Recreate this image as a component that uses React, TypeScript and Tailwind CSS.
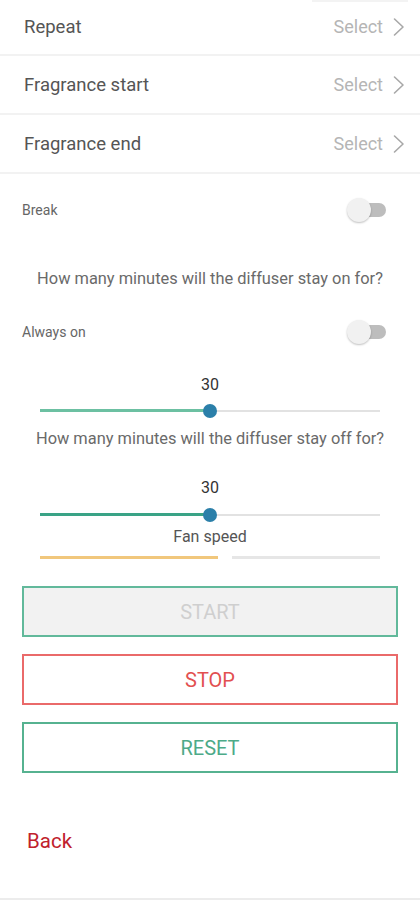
import React, { useState } from "react";

const font = { fontFamily: "Roboto, 'Liberation Sans', sans-serif" };

const SelectRow = ({ label, className = "" }: { label: string; className?: string }) => (
  <div className={`flex items-center justify-between pl-6 pr-[15px] border-b-2 border-[#f2f2f2] ${className}`}>
    <span className="text-[18.5px] leading-[24px] text-[#555]">{label}</span>
    <span className="flex items-center gap-[9px] text-[18px] leading-[24px] text-[#b5b5b5]">
      Select
      <svg width="13" height="20" viewBox="0 0 13 20" fill="none">
        <path d="M2.5 2 L11 10 L2.5 18" stroke="#a8a8a8" strokeWidth="1.6" strokeLinecap="round" strokeLinejoin="round" />
      </svg>
    </span>
  </div>
);

const Toggle = () => (
  <div className="relative w-[40px] h-[24px] mr-[33px]">
    <div className="absolute left-[10px] right-[1px] top-[5px] h-[14px] rounded-full bg-[#bdbdbd]" />
    <div className="absolute left-0 top-0 w-[24px] h-[24px] rounded-full bg-[#f1f1f1] shadow-[0_1px_2px_rgba(0,0,0,0.25)]" />
  </div>
);

const Slider = ({ value, fill, gap }: { value: number; fill: string; gap: string }) => (
  <div className="flex flex-col items-center">
    <span className="text-[16px] text-[#333] leading-[16px]">{value}</span>
    <div className={`relative w-[340px] h-[14px] ${gap}`}>
      <div className="absolute left-0 right-0 top-[6px] h-[2px] bg-[#e2e2e2]" />
      <div className={`absolute left-0 top-[5px] h-[3px] w-[170px] ${fill}`} />
      <div className="absolute left-[163px] top-0 w-[14px] h-[14px] rounded-full bg-[#2b7fa9]" />
    </div>
  </div>
);

export default function App() {
  const [status] = useState("idle");

  return (
    <div className="w-[420px] h-[900px] bg-white overflow-hidden flex flex-col border-b-2 border-[#ececec]" style={font} data-status={status}>
      <div className="flex justify-end pr-[12px]">
        <div className="w-[96px] h-[2px] bg-[#f3f3f3]" />
      </div>
      <SelectRow label="Repeat" className="h-[54px] pb-[3px]" />
      <SelectRow label="Fragrance start" className="h-[59px]" />
      <SelectRow label="Fragrance end" className="h-[59px]" />

      <div className="flex items-center justify-between pl-[22px] mt-[24px]">
        <span className="text-[14px] leading-[20px] text-[#666]">Break</span>
        <Toggle />
      </div>

      <p className="text-center text-[16.4px] leading-[20px] text-[#6a6a6a] mt-[47px]">How many minutes will the diffuser stay on for?</p>

      <div className="flex items-center justify-between pl-[22px] mt-[31px]">
        <span className="text-[14px] leading-[20px] text-[#666]">Always on</span>
        <Toggle />
      </div>

      <div className="mt-[33px]">
        <Slider value={30} fill="bg-[#6cc0a2]" gap="mt-[11px]" />
      </div>
      <p className="text-center text-[16.4px] leading-[20px] text-[#6a6a6a] mt-[11px]">How many minutes will the diffuser stay off for?</p>

      <div className="mt-[31px]">
        <Slider value={30} fill="bg-[#3aa386]" gap="mt-[12px]" />
      </div>
      <p className="text-center text-[16px] leading-[20px] text-[#555] mt-[5px]">Fan speed</p>

      <div className="flex gap-[14px] px-[40px] mt-[9px]">
        <div className="w-[178px] h-[3px] bg-[#f1c77c]" />
        <div className="flex-1 h-[3px] bg-[#e6e6e6]" />
      </div>

      <div className="flex flex-col gap-[17px] px-[22px] mt-[27px]">
        <button className="h-[51px] border-2 border-[#62b99b] bg-[#f2f2f2] text-[20px] text-[#cfcfcf]">START</button>
        <button className="h-[51px] border-2 border-[#ea6a6a] bg-white text-[20px] text-[#e25050]">STOP</button>
        <button className="h-[51px] border-2 border-[#56b290] bg-white text-[20px] text-[#4daa88]">RESET</button>
      </div>

      <div className="pl-[27px] mt-[53px]">
        <span className="text-[20.5px] leading-[30px] text-[#c0212c]">Back</span>
      </div>
    </div>
  );
}
